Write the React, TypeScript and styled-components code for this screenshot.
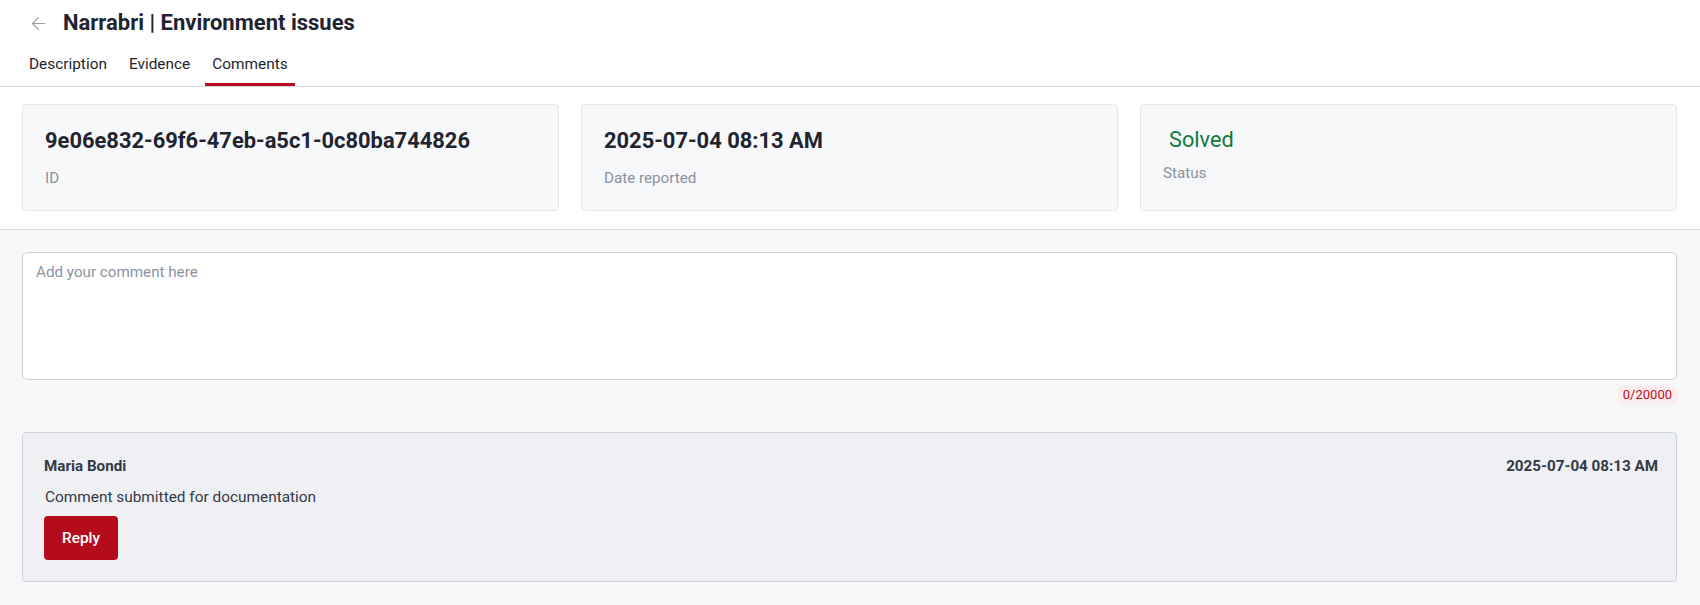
import React, { useState } from 'react';
import styled, { createGlobalStyle } from 'styled-components';
import { ArrowLeft } from 'lucide-react';

const GlobalStyle = createGlobalStyle`
  html, body {
    margin: 0;
    padding: 0;
    background: #ffffff;
    font-family: Roboto, 'Liberation Sans', sans-serif;
    color: #1f2430;
  }
  * {
    box-sizing: border-box;
  }
`;

const Page = styled.div`
  display: flex;
  flex-direction: column;
  min-height: 605px;
  background: #f6f7f9;
`;

const Header = styled.header`
  background: #ffffff;
  padding: 8px 22px 0;
  border-bottom: 1px solid #d4d7dd;
`;

const TitleRow = styled.div`
  display: flex;
  align-items: center;
  height: 30px;
  gap: 14px;
  padding-left: 6px;
`;

const BackButton = styled.button`
  display: flex;
  align-items: center;
  justify-content: center;
  padding: 0;
  border: none;
  background: none;
  color: #9aa1ab;
  cursor: pointer;
`;

const Title = styled.h1`
  margin: 0;
  font-size: 22px;
  line-height: 26px;
  font-weight: 700;
  color: #1f2430;
`;

const Tabs = styled.nav`
  display: flex;
  gap: 8px;
  margin-top: 5px;
`;

const Tab = styled.button<{ active?: boolean }>`
  padding: 12px 7px 10px;
  border: none;
  border-bottom: 3px solid ${({ active }) => (active ? '#b80e1c' : 'transparent')};
  background: none;
  font-family: inherit;
  font-size: 15.4px;
  line-height: 18px;
  color: #1f2430;
  cursor: pointer;
`;

const Summary = styled.section`
  display: grid;
  grid-template-columns: repeat(3, 1fr);
  gap: 22px;
  padding: 17px 23px 18px 22px;
  background: #ffffff;
  border-bottom: 1px solid #d4d7dd;
`;

const InfoCard = styled.div`
  display: flex;
  flex-direction: column;
  height: 107px;
  padding: 23px 22px 0;
  background: #f7f8f9;
  border: 1px solid #e5e7eb;
  border-radius: 4px;
`;

const InfoValue = styled.div`
  font-size: 21.9px;
  line-height: 26px;
  font-weight: 700;
  color: #1f2430;
  margin-bottom: 14px;
`;

const StatusValue = styled.div`
  padding: 1px 0 0 6px;
  font-size: 21.7px;
  line-height: 22px;
  font-weight: 400;
  color: #0e7a3c;
  margin-bottom: 12px;
`;

const InfoLabel = styled.div`
  font-size: 15.2px;
  line-height: 20px;
  color: #8a92a1;
`;

const CommentsSection = styled.section`
  flex: 1;
  display: flex;
  flex-direction: column;
  padding: 22px 23px 23px 22px;
  background: #f6f7f9;
`;

const CommentInput = styled.textarea`
  display: block;
  width: 100%;
  height: 128px;
  padding: 9px 13px;
  resize: none;
  border: 1px solid #c9cdd6;
  border-radius: 6px;
  background: #ffffff;
  font-family: inherit;
  font-size: 15.2px;
  line-height: 20px;
  color: #1f2430;
  outline: none;

  &::placeholder {
    color: #8a92a1;
  }
`;

const CounterRow = styled.div`
  display: flex;
  justify-content: flex-end;
  margin-top: 6px;
`;

const Counter = styled.span`
  padding: 0 5px;
  border-radius: 3px;
  background: #fdeced;
  color: #c0101f;
  font-size: 13px;
  line-height: 18px;
`;

const CommentCard = styled.article`
  display: flex;
  flex-direction: column;
  align-items: flex-start;
  margin-top: 28px;
  padding: 23px 18px 21px 21px;
  background: #eff0f4;
  border: 1px solid #cfd3da;
  border-radius: 4px;
`;

const CommentMeta = styled.div`
  display: flex;
  justify-content: space-between;
  align-self: stretch;
  font-size: 15.2px;
  line-height: 20px;
  font-weight: 700;
  color: #343a45;
`;

const CommentBody = styled.p`
  margin: 11px 0 9px 1px;
  font-size: 15.4px;
  line-height: 20px;
  color: #343a45;
`;

const ReplyButton = styled.button`
  height: 44px;
  padding: 0 18px;
  border: none;
  border-radius: 4px;
  background: #b40c1b;
  color: #ffffff;
  font-family: inherit;
  font-size: 15.4px;
  font-weight: 500;
  cursor: pointer;
`;

const tabs = ['Description', 'Evidence', 'Comments'];

export default function App() {
  const [activeTab, setActiveTab] = useState('Comments');
  const [comment, setComment] = useState('');

  return (
    <>
      <GlobalStyle />
      <Page>
        <Header>
          <TitleRow>
            <BackButton aria-label='back'>
              <ArrowLeft size={21} strokeWidth={1.4} />
            </BackButton>
            <Title>Narrabri | Environment issues</Title>
          </TitleRow>
          <Tabs>
            {tabs.map((tab) => (
              <Tab key={tab} active={tab === activeTab} onClick={() => setActiveTab(tab)}>
                {tab}
              </Tab>
            ))}
          </Tabs>
        </Header>

        <Summary>
          <InfoCard>
            <InfoValue>9e06e832-69f6-47eb-a5c1-0c80ba744826</InfoValue>
            <InfoLabel>ID</InfoLabel>
          </InfoCard>
          <InfoCard>
            <InfoValue>2025-07-04 08:13 AM</InfoValue>
            <InfoLabel>Date reported</InfoLabel>
          </InfoCard>
          <InfoCard>
            <StatusValue>Solved</StatusValue>
            <InfoLabel>Status</InfoLabel>
          </InfoCard>
        </Summary>

        <CommentsSection>
          <CommentInput
            placeholder='Add your comment here'
            value={comment}
            maxLength={20000}
            onChange={(e) => setComment(e.target.value)}
          />
          <CounterRow>
            <Counter>{comment.length}/20000</Counter>
          </CounterRow>

          <CommentCard>
            <CommentMeta>
              <span>Maria Bondi</span>
              <span>2025-07-04 08:13 AM</span>
            </CommentMeta>
            <CommentBody>Comment submitted for documentation</CommentBody>
            <ReplyButton>Reply</ReplyButton>
          </CommentCard>
        </CommentsSection>
      </Page>
    </>
  );
}
